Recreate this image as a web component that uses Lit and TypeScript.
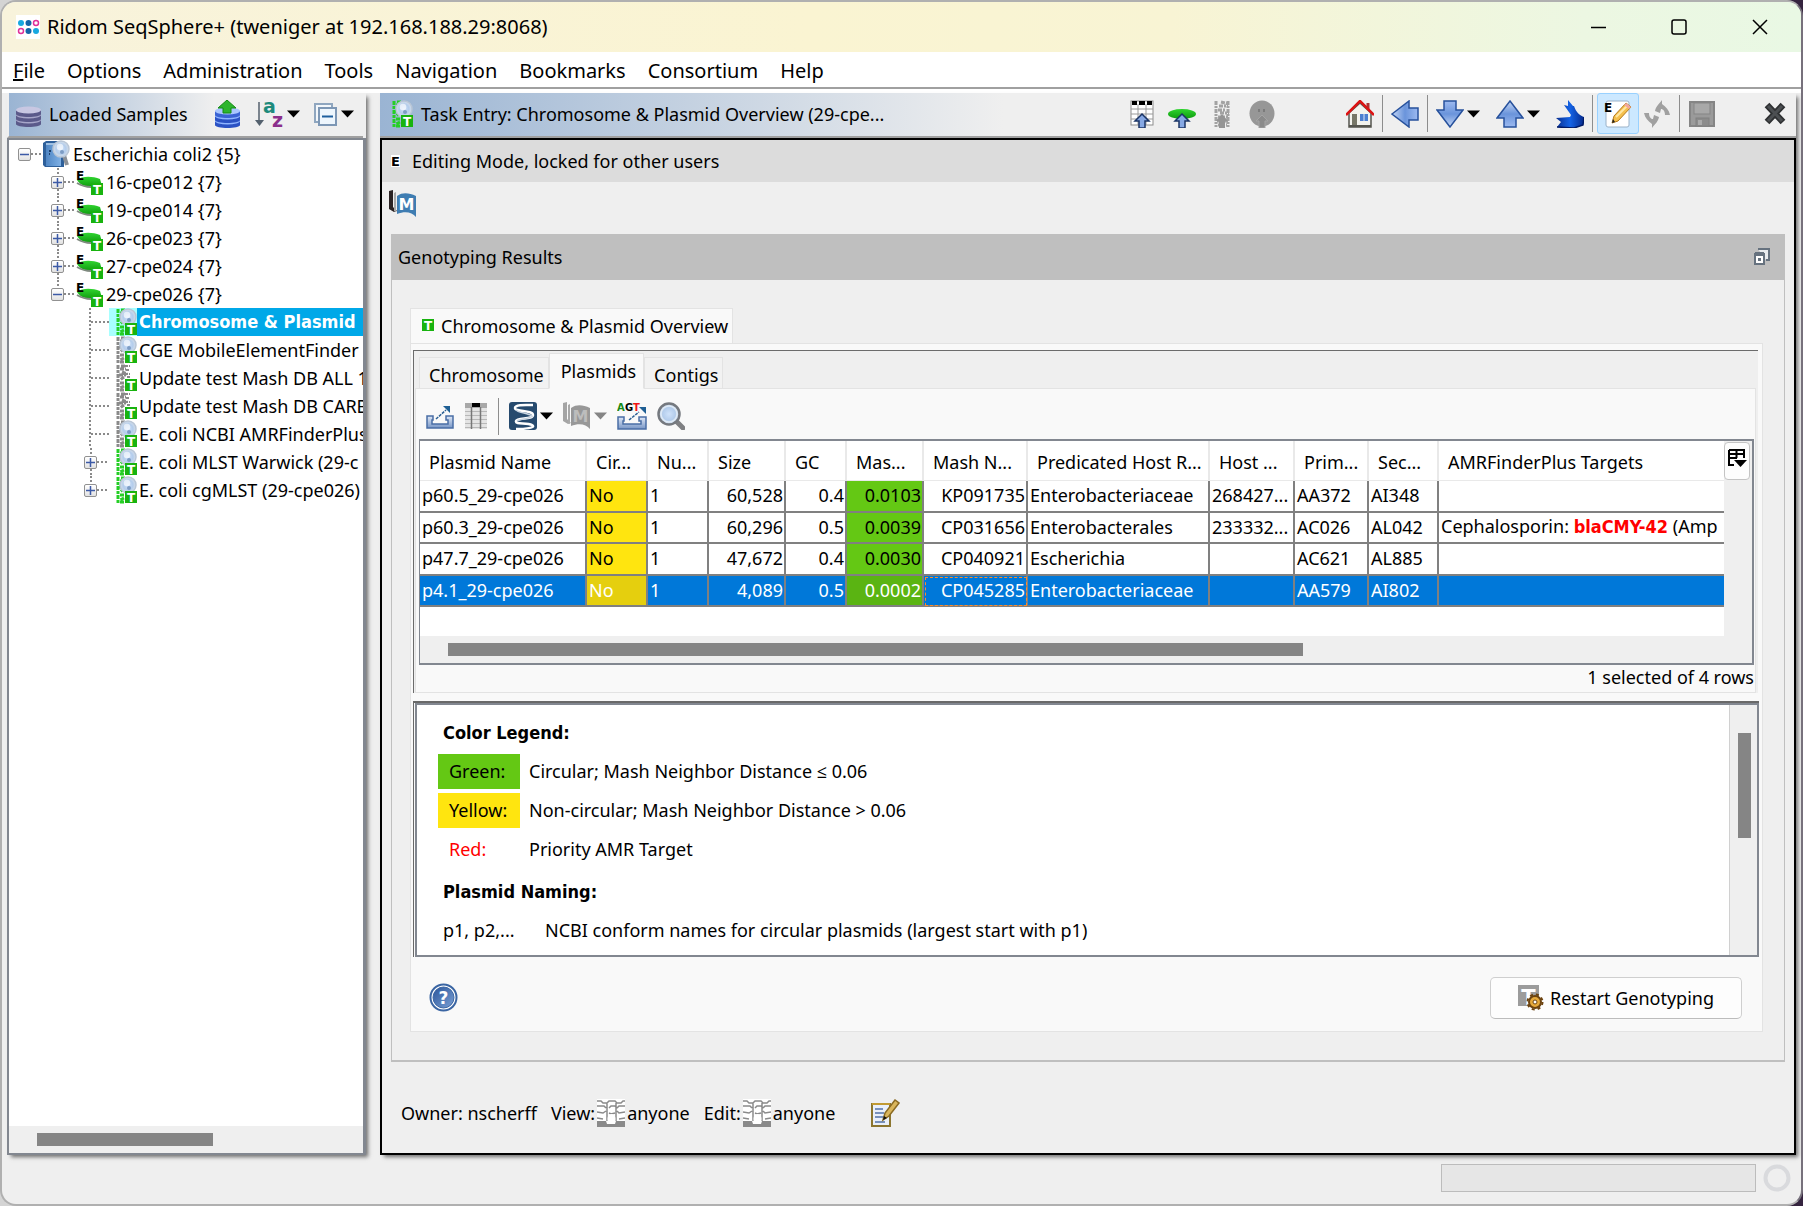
import { LitElement, html, svg, css, nothing, TemplateResult, SVGTemplateResult } from "lit";
import { customElement, state } from "lit/decorators.js";
import { classMap } from "lit/directives/class-map.js";

const icon = (w: number, h: number, body: SVGTemplateResult | SVGTemplateResult[]) =>
  html`<svg class="icon" width=${w} height=${h} viewBox="0 0 ${w} ${h}" aria-hidden="true">${body}</svg>`;

const badgeT = (x: number, y: number, s = 12, fill = "#18b30f") => svg`
  <rect x=${x} y=${y} width=${s} height=${s} fill=${fill} />
  <text x=${x + s / 2} y=${y + s - 1} font-size=${s} font-weight="bold" text-anchor="middle" fill="#fff" class="glyph">T</text>`;

const lens = (x: number, y: number, r: number) => svg`
  <circle cx=${x} cy=${y} r=${r} fill="url(#glass)" stroke="#b9c6d6" stroke-width="1.5" />
  <circle cx=${x - 1} cy=${y - 2} r=${r / 2.4} fill="#fff" opacity=".65" />
  <circle cx=${x + 1} cy=${y + 3} r="2" fill="#7d9cc4" />`;

const helix = (color: string) => svg`
  <path d="M2 1v26M5 2h4M4 5h6M6 8l5 2M3 11h7M8 13l-4 3M4 19h6M8 22l-4 2M4 26h5" fill="none" stroke=${color}
    stroke-width="3" stroke-dasharray="4 1 3 1" />`;

const iconTask = (color: string, withLens: boolean) => icon(21, 28, [
  helix(color),
  withLens ? lens(12, 9, 8) : svg`<path d="M9 2h5M10 6h4M9 10h5M11 13h3" stroke=${color} stroke-width="2" stroke-dasharray="3 1" />`,
  badgeT(9, 15),
]);

const iconSample = icon(28, 28, svg`
  <path d="M1 12c5-4 15-4 23-1l2 7-9 1c-7 0-13-2-16-7z" fill="url(#leaf)" />
  <path d="M1 15c5 3 9 4 14 4" stroke="#7f8a7f" stroke-width="2" fill="none" />
  <text x="0" y="12" font-size="12" font-weight="bold" class="glyph">E</text>${badgeT(15, 15)}`);

const iconProject = icon(28, 28, svg`
  <path d="M0 3l3-2h18v26H2l-2-2z" fill="#2d5f9a" /><rect x="3" y="3" width="15" height="23" fill="url(#folder)" />
  <path d="M3 4h15" stroke="#9fc0e2" stroke-width="2" /><path d="M20 12l4 13" stroke="#8b9097" stroke-width="4" />
  <path d="M6 11h2M10 11h1M6 14h1" stroke="#1c3f6d" stroke-width="2" />${lens(18, 9, 8)}`);

const dbDisk = (y: number, light: string, dark: string) => svg`
  <path d="M2 ${y}v4c0 4 25 4 25 0v-4z" fill=${dark} /><ellipse cx="14.5" cy=${y} rx="12.5" ry="3.5" fill=${light} />`;
const iconDb = icon(29, 28, svg`
  ${dbDisk(20, "#a7a6c9", "#5b5a8a")}${dbDisk(15, "#a7a6c9", "#5b5a8a")}${dbDisk(10, "#c8c7e2", "#5b5a8a")}`);
const iconDbUp = icon(28, 28, svg`
  ${dbDisk(21, "#8fb4ff", "#2b52c4")}${dbDisk(16, "#8fb4ff", "#2b52c4")}${dbDisk(11, "#a9c6ff", "#3a63d4")}
  <path d="M14 0l9 8h-5v5h-8V8H5z" fill="#2db52d" stroke="#158a15" />`);
const iconSort = icon(29, 28, svg`
  <path d="M4 2v20" stroke="#54616e" stroke-width="1.5" /><path d="M0 20h9l-4.500 6z" fill="#54616e" />
  <text x="8" y="13" font-size="19" font-weight="bold" fill="#1d8a7b" class="glyph">a</text>
  <text x="17" y="27" font-size="19" font-weight="bold" fill="#8b2f8b" class="glyph">z</text>`);
const iconCollapse = icon(24, 28, svg`
  <rect x="1" y="4" width="17" height="18" fill="#f3f7fb" stroke="#8fa6bf" stroke-width="2" />
  <rect x="5" y="8" width="17" height="17" fill="#eef6fd" stroke="#7d97b5" stroke-width="2" />
  <path d="M8 16.500h11" stroke="#1e5f9e" stroke-width="2" />`);
const caret = (color = "#000") => icon(13, 28, svg`<path d="M0 10.500h13l-6.500 7z" fill=${color} />`);

const upArrow = (x: number) =>
  svg`<path d="M${x} 14l7 7h-4v7h-6v-7h-4z" fill="#86a8e4" stroke="#1b3566" stroke-width="1.5" />`;
const iconTableUp = icon(28, 28, svg`
  <rect x="3" y="1" width="22" height="24" fill="#fff" stroke="#8d8d8d" /><path d="M10 4v21M18 4v21M3 9h22M3 14h22M3 19h22" stroke="#9a9a9a" />
  <path d="M4 1h5v4H4zM11 1h6v4h-6zM19 1h5v4h-5z" fill="#000" />${upArrow(14)}`);
const iconGreenUp = icon(28, 28, svg`
  <ellipse cx="14" cy="14" rx="14" ry="5" fill="url(#leaf)" />${upArrow(14)}`);
const iconHelixUp = icon(28, 28, svg`
  <path d="M8 1v26M13 2l8 2M11 6h9M10 10h8M12 13h9M10 17h10M9 21h11M10 25h9M20 1v26" fill="none" stroke="#a2a2a2" stroke-width="3" stroke-dasharray="4 1 2 1" />
  <path d="M14 14l6 7h-3v7h-6v-7H8z" fill="#949494" />`);
const iconBallUp = icon(28, 28, svg`
  <ellipse cx="14" cy="13.500" rx="12.500" ry="13" fill="#979797" /><path d="M14 15l6 6h-3v7h-6v-7H8z" fill="#8a8a8a" stroke="#a4a4a4" />
  <path d="M11 9v3M16 9v3" stroke="#7b7b7b" stroke-width="2" />`);
const iconHome = icon(28, 28, svg`
  <path d="M3 13L14 3l11 10v14H3z" fill="#f3f3ee" stroke="#55554e" stroke-width="1.5" /><path d="M22 3v6" stroke="#a33" stroke-width="3" />
  <path d="M0 15L14 1l14 14" fill="none" stroke="#dc1414" stroke-width="2.500" />
  <rect x="6" y="14" width="5" height="12" fill="#777768" /><rect x="14" y="14" width="8" height="7" fill="#4c7fd0" />
  <path d="M18 14v7" stroke="#dfe9f8" /><path d="M3 26h22" stroke="#55554e" stroke-width="2" />`);
const arrow = (turn: number) => icon(28, 28, svg`
  <g transform="rotate(${turn} 14 14)"><path d="M14 1l13 17h-7v9H8v-9H1z" fill="url(#blueArrow)" stroke="#27519c" stroke-width="1.5" /></g>`);
const iconJump = icon(28, 28, svg`
  <path d="M12 0l5 6h1c2 6 5 9 10 11l-1 8-9 3-17-1 4-5-5-4 14-1 1-2-7-10 4 1z" fill="url(#jump)" />
  <path d="M1 27l17 1 9-3 1-8" stroke="#001a66" stroke-width="1.500" fill="none" />`);
const iconEdit = icon(28, 28, svg`
  <rect x="2" y="1" width="23" height="26" rx="2" fill="#fff" stroke="#9bb2c8" />
  <text x="0" y="12" font-size="12" font-weight="bold" class="glyph">E</text>
  <path d="M8 23l2-7L22 3l5 4-13 14z" fill="#f4c04d" stroke="#b57a1c" /><path d="M12 17L24 5" stroke="#ffe7a2" stroke-width="2" />
  <path d="M22 3l5 4-2 2-5-4z" fill="#f0a6a0" /><path d="M8 23l1-4 2 3z" fill="#222" />`);
const iconRefresh = icon(28, 28, svg`
  <path d="M12 11c1-5 4-7 7-11v4c4 3 7 6 8 11l-5 0c0-4-2-6-4-6l-1 4z" fill="#a0a0a0" />
  <path d="M16 17c-1 5-4 7-7 11v-4c-4-3-7-6-8-11h5c0 4 2 6 4 6l1-4z" fill="#a0a0a0" />`);
const iconSave = icon(28, 28, svg`
  <rect x="2" y="2" width="24" height="24" fill="#9a9a9a" stroke="#858585" stroke-width="2" /><rect x="6" y="3" width="16" height="11" fill="#a8a8a8" stroke="#858585" />
  <rect x="8" y="18" width="13" height="8" fill="#8b8b8b" stroke="#808080" /><rect x="10" y="20" width="4" height="5" fill="#aaa" />`);
const iconClose = icon(22, 28, svg`
  <path d="M3 5l16 17M19 5L3 22" stroke="#2f3133" stroke-width="6.500" /><path d="M4 6l14 15M18 6L4 21" stroke="#4c4f52" stroke-width="3" />`);

const iconE = icon(9, 12, svg`<rect width="9" height="12" fill="#fff" /><text x="0" y="11" font-size="13" font-weight="bold" class="glyph">E</text>`);
const mark = (a: string, b: string, c: string) => icon(28, 28, svg`
  <path d="M0 1l4-1v17l4 4-3 1-5-3z" fill=${a} /><path d="M5 3l2-1v20l-2-1z" fill="#a9a9a9" />
  <path d="M8 6c6-4 12-3 19 0v21c-4-5-11-6-19-3z" fill=${b} />
  <text x="17.500" y="20" font-size="16" font-weight="bold" text-anchor="middle" fill=${c} class="glyph">M</text>`);
const iconWindow = icon(18, 18, svg`
  <path d="M5 1h11v11h-3" fill="#e8ebee" stroke="#66727f" stroke-width="2" /><rect x="2" y="6" width="9" height="10" fill="#fff" stroke="#66727f" stroke-width="2" />
  <path d="M2 6h9" stroke="#66727f" stroke-width="4" /><rect x="5" y="10" width="3" height="3" fill="#66727f" />`);

const iconExport = icon(28, 28, svg`
  <path d="M1 14h6v4H6v4h16v-4h-2v-4h7v12H1z" fill="url(#tray)" stroke="#4a6ea5" stroke-width="1.5" />
  <path d="M10 17l10-9" stroke="#2b5f93" stroke-width="1.500" stroke-dasharray="3 1" /><path d="M17 4h7v7z" fill="#1f5f94" />`);
const iconColumns = icon(24, 28, svg`
  <rect x="1" y="1" width="22" height="26" fill="#e4e4e4" /><rect x="1" y="1" width="22" height="5" fill="#a8a8a8" /><rect x="8" y="1" width="8" height="4" fill="#000" />
  <path d="M1 9.500h22M1 13.500h22M1 17.500h22M1 21.500h22M1 25.500h22" stroke="#b8b8b8" /><path d="M7.500 5v22M16.500 5v22" stroke="#777" stroke-width="1.500" />`);
const iconStrand = icon(28, 28, svg`
  <rect width="28" height="28" rx="3" fill="#264a6e" />
  <path d="M24 3c-6 0-18-1-18 3s18 2 18 7-16 2-17 6 11 1 16 4-8 4-16 4" fill="none" stroke="#fff" stroke-width="2.500" />
  <path d="M7 8c3 3 12 3 16 6M24 14c-4 3-13 3-16 5" fill="none" stroke="#c8d5e2" stroke-width="1.500" />`);
const iconAgt = icon(30, 28, svg`
  <path d="M1 15h6v4H6v3h18v-3h-2v-4h7v12H1z" fill="url(#tray)" stroke="#4a6ea5" stroke-width="1.5" />
  <path d="M12 18l10-8" stroke="#2b5f93" stroke-width="1.500" stroke-dasharray="3 1" /><path d="M22 5h7v7z" fill="#1f5f94" />
  <text x="0" y="9" font-size="10" font-weight="bold" fill="#178a17" class="glyph">A</text><text x="8" y="9" font-size="10" font-weight="bold" class="glyph">G</text>
  <text x="16" y="9" font-size="10" font-weight="bold" fill="#f01414" class="glyph">T</text>`);
const iconFind = icon(28, 28, svg`
  <path d="M19 19l7 7" stroke="#7f8083" stroke-width="5" stroke-linecap="round" /><circle cx="12" cy="12" r="10.500" fill="url(#glass)" stroke="#75797f" stroke-width="2.500" />
  <circle cx="12" cy="12" r="8" fill="none" stroke="#dfeaf6" stroke-width="1.500" />`);
const iconColumnMenu = icon(19, 20, svg`
  <path d="M1 1h15v8M1 1v15h5M1 5h15M8.500 1v8M1 9h8" fill="none" stroke="#000" stroke-width="2" /><path d="M6 11h13l-6.500 7z" fill="#000" />`);

const iconHelp = icon(29, 29, svg`
  <circle cx="14.500" cy="14.500" r="13" fill="#fff" stroke="#3a65a3" stroke-width="2" /><circle cx="14.500" cy="14.500" r="10.500" fill="url(#help)" stroke="#3a65a3" />
  <text x="14.500" y="21" font-size="17" font-weight="bold" text-anchor="middle" fill="#fff" class="glyph">?</text>`);
const iconRestart = icon(26, 26, svg`
  ${badgeT(0, 0, 21, "#9c9c9c")}
  <circle cx="17" cy="17" r="6" fill="#e6a93a" stroke="#6d4410" stroke-width="2" /><circle cx="17" cy="17" r="7.500" fill="none" stroke="#6d4410" stroke-width="2" stroke-dasharray="3 3" />
  <circle cx="17" cy="17" r="2" fill="#fff" stroke="#6d4410" />`);
const iconGroup = icon(28, 28, svg`
  <rect width="28" height="28" fill="#fff" />
  <path d="M0 2h4l2 2h4l2-2h6l2 2h4l2-2h2M0 7h7l2 2M12 9l2-2h4l2 2M28 7h-6l-2 2M0 13l6 1 3-2M12 14l2 1 4-1M28 13l-6 1-2-2M10 4v18M19 4v18M0 19l6 1M28 19l-6 1" fill="none" stroke="#8a8a8a" stroke-width="1.500" />
  <path d="M0 22h9l1 3h8l1-3h9v6H0z" fill="#8a8a8a" /><ellipse cx="14.500" cy="20" rx="4" ry="5" fill="#fff" />`);
const iconNote = icon(29, 28, svg`
  <rect x="1" y="5" width="18" height="22" fill="#eaf0fa" stroke="#8c7630" stroke-width="2" /><path d="M1 5h18" stroke="#c29a32" stroke-width="2" />
  <path d="M4 10h8M4 14h9M4 18h9M4 23h10" stroke="#5372a8" stroke-width="1.500" />
  <path d="M12 21l2-7L24 1l4 3-10 13z" fill="#d9b55c" stroke="#8a6a22" stroke-width="1.500" /><path d="M12 21l1-4 3 2z" fill="#111" />`);
const iconRidom = icon(24, 24, svg`
  <rect width="24" height="24" fill="#fff" /><g stroke-width="1.500">
  <circle cx="5" cy="8" r="3" fill="#18a8e0" /><circle cx="12.500" cy="8" r="3" fill="#1565a8" /><circle cx="20" cy="8" r="2.500" fill="none" stroke="#e0319a" />
  <circle cx="5" cy="16" r="2.500" fill="none" stroke="#e0319a" /><circle cx="12.500" cy="16" r="3" fill="#1565a8" /><circle cx="20" cy="16" r="3" fill="#18a8e0" /></g>`);

const defs = html`<svg class="defs" width="0" height="0" aria-hidden="true"><defs>
  <radialGradient id="glass"><stop offset="0" stop-color="#cfe2fa" /><stop offset=".6" stop-color="#b4cdec" /><stop offset="1" stop-color="#d5dfea" /></radialGradient>
  <linearGradient id="leaf" x2="0" y2="1"><stop offset="0" stop-color="#2fd42f" /><stop offset="1" stop-color="#0f9a0f" /></linearGradient>
  <linearGradient id="folder"><stop offset="0" stop-color="#4f86c4" /><stop offset="1" stop-color="#7fb0e4" /></linearGradient>
  <linearGradient id="blueArrow" x2="0" y2="1"><stop offset="0" stop-color="#c4d6f5" /><stop offset=".5" stop-color="#6a94db" /><stop offset="1" stop-color="#9dbaf0" /></linearGradient>
  <linearGradient id="jump"><stop offset="0" stop-color="#0a2f8f" /><stop offset=".5" stop-color="#1463e6" /><stop offset="1" stop-color="#062a8c" /></linearGradient>
  <linearGradient id="tray" x2="0" y2="1"><stop offset="0" stop-color="#dfe8f6" /><stop offset="1" stop-color="#7896c6" /></linearGradient>
  <linearGradient id="help" x2="1" y2="1"><stop offset="0" stop-color="#2a559b" /><stop offset="1" stop-color="#7ba0d4" /></linearGradient>
</defs></svg>`;

interface Node { level: 0 | 1 | 2; label: string; art: TemplateResult; fold?: "open" | "closed"; last?: boolean; current?: boolean }
const GREEN = "#25cf25", GREY = "#8a8a8a";
const TREE: Node[] = [
  { level: 0, label: "Escherichia coli2 {5}", art: iconProject, fold: "open" },
  { level: 1, label: "16-cpe012 {7}", art: iconSample, fold: "closed" },
  { level: 1, label: "19-cpe014 {7}", art: iconSample, fold: "closed" },
  { level: 1, label: "26-cpe023 {7}", art: iconSample, fold: "closed" },
  { level: 1, label: "27-cpe024 {7}", art: iconSample, fold: "closed" },
  { level: 1, label: "29-cpe026 {7}", art: iconSample, fold: "open", last: true },
  { level: 2, label: "Chromosome & Plasmid", art: iconTask(GREEN, true), current: true },
  { level: 2, label: "CGE MobileElementFinder (", art: iconTask(GREY, true) },
  { level: 2, label: "Update test Mash DB ALL 1", art: iconTask(GREY, false) },
  { level: 2, label: "Update test Mash DB CARB", art: iconTask(GREY, false) },
  { level: 2, label: "E. coli NCBI AMRFinderPlus", art: iconTask(GREY, true) },
  { level: 2, label: "E. coli MLST Warwick (29-c", art: iconTask(GREEN, true), fold: "closed" },
  { level: 2, label: "E. coli cgMLST (29-cpe026)", art: iconTask(GREEN, true), fold: "closed", last: true },
];

const COLUMNS = [
  ["name", "Plasmid Name"], ["circ", "Cir..."], ["num", "Nu..."], ["size", "Size"], ["gc", "GC"], ["mash", "Mas..."], ["near", "Mash N..."],
  ["host", "Predicated Host R..."], ["hostid", "Host ..."], ["prim", "Prim..."], ["sec", "Sec..."], ["amr", "AMRFinderPlus Targets"],
];
const amr = html`Cephalosporin: <b class="alert">blaCMY-42</b> (Amp`;
const ROWS: (string | TemplateResult)[][] = [
  ["p60.5_29-cpe026", "No", "1", "60,528", "0.4", "0.0103", "KP091735", "Enterobacteriaceae", "268427...", "AA372", "AI348", ""],
  ["p60.3_29-cpe026", "No", "1", "60,296", "0.5", "0.0039", "CP031656", "Enterobacterales", "233332...", "AC026", "AL042", amr],
  ["p47.7_29-cpe026", "No", "1", "47,672", "0.4", "0.0030", "CP040921", "Escherichia", "", "AC621", "AL885", ""],
  ["p4.1_29-cpe026", "No", "1", "4,089", "0.5", "0.0002", "CP045285", "Enterobacteriaceae", "", "AA579", "AI802", ""],
];

@customElement("app-root")
export class AppRoot extends LitElement {
  @state() private selected = 3;

  static styles = css`
    :host { display: block; height: 100vh; font: 18px/28px "Noto Sans", "Open Sans", sans-serif; color: #000;
      background: linear-gradient(90deg, #d4d4d4 50%, #35243f 50%); }
    * { box-sizing: border-box; }
    b, h2, .current .label { font-family: "DejaVu Sans Condensed", "DejaVu Sans", sans-serif; font-weight: bold; }
    button { font: inherit; color: inherit; background: none; border: 0; padding: 0; margin: 0; display: inline-flex; align-items: center; }
    ul, dl, dd, dt, h1, h2, p { margin: 0; padding: 0; }
    .icon { display: block; flex: none; }
    .glyph { font-family: "DejaVu Sans", sans-serif; }
    .defs { position: absolute; }
    .fill { flex: 1; min-width: 0; }
    .window { height: 100%; display: flex; flex-direction: column; background: #efefef; border: 2px solid #b0b0b0; border-right-color: #77717c;
      border-radius: 16px; overflow: hidden; }

    .titlebar { height: 50px; flex: none; display: flex; align-items: center; gap: 7px; padding: 0 33px 0 14px; font-size: 20px;
      background: linear-gradient(90deg, #f8f3dc, #faf4d2 45%, #f8f4d4 65%, #ecf7e2 88%, #e9f8e4); }
    .titlebar h1 { font-size: 20px; font-weight: normal; }
    .titlebar .controls { display: flex; gap: 65px; }
    .menubar { height: 37px; flex: none; display: flex; gap: 22px; padding: 3px 11px 0; background: #fff; border-bottom: 2px solid #a0a0a0; font-size: 20px; }
    .strip { height: 4px; flex: none; background: #fff; }

    .main { flex: 1; min-height: 0; display: flex; gap: 14px; padding: 0 5px; }
    .panel { display: flex; flex-direction: column; min-height: 0; box-shadow: 3px 3px 4px -1px rgba(0, 0, 0, .55); }
    .side { width: 359px; flex: none; }
    .task { flex: 1; min-width: 0; }
    .bar { height: 45px; flex: none; display: flex; align-items: center; padding-bottom: 2px; border-bottom: 2px solid #a0a0a0; white-space: nowrap; }
    .side .bar { margin: 0 3px 0 0; padding-left: 5px; padding-right: 9px; gap: 14px; background: linear-gradient(90deg, #9ab4d3, #efefef 58%); border-left: 2px solid #efefef; }
    .side .bar .title { display: flex; align-items: center; gap: 6px; }
    .task .bar { padding-left: 12px; padding-right: 10px; gap: 8px; background: linear-gradient(90deg, #9ab4d3, #efefef 44%); }
    .bar h2 { font: inherit; }
    .drop { display: inline-flex; gap: 3px; }
    .task .bar .drop { padding-right: 8px; }
    .sep { width: 1px; height: 37px; background: #8d8d8d; }
    .shelf { display: flex; gap: 12px; margin-right: 62px; }
    .mode { display: flex; align-items: center; gap: 4px; }
    .mode .on { padding: 6px; height: 41px; border: 1px solid #99d1ff; border-radius: 3px; background: #cce8ff; }
    .dismiss { margin-left: 40px; }

    .treebox { flex: 1; min-height: 0; display: flex; flex-direction: column; background: #fff; border: 2px solid #828790; border-right-width: 3px; }
    .tree { flex: 1; overflow: hidden; list-style: none; }
    .node { display: flex; height: 28px; align-items: center; white-space: nowrap; }
    .node > * { flex: none; }
    .node.l0 { padding-left: 9px; }
    .node.l1 { padding-left: 42px; }
    .node.l2 { padding-left: 75px; }
    .node.leaf { padding-left: 80px; }
    .rail { width: 13px; height: 28px; display: flex; flex-direction: column; align-items: center; }
    .leaf .rail { width: 2px; }
    .v { flex: 1; width: 2px; background: repeating-linear-gradient(#8a8a8a 0 2px, transparent 2px 4px); }
    .v.off { background: none; }
    .h { width: 12px; height: 2px; background: repeating-linear-gradient(90deg, #8a8a8a 0 2px, transparent 2px 4px); }
    .leaf .h { width: 18px; }
    .fold { width: 13px; height: 13px; justify-content: center; border: 1px solid #919191; border-radius: 2px; background: linear-gradient(#fff, #e2e2e2); }
    .art { display: flex; }
    .l2 .art { padding-left: 7px; }
    .label { padding-left: 2px; height: 28px; }
    .current .art { background: #a8ffff; }
    .current .label { flex: 1; background: #00a8e8; color: #fff; }
    .htrack { height: 27px; flex: none; padding: 7px 28px; background: #efefef; }
    .thumb { background: #858585; height: 13px; }
    .side .thumb { width: 59%; }

    .body { flex: 1; min-height: 0; display: flex; flex-direction: column; border: 2px solid #000; }
    .banner { height: 42px; flex: none; display: flex; align-items: center; gap: 12px; padding-left: 9px; background: #dcdcdc; }
    .quick { height: 52px; flex: none; padding: 8px 7px; }
    .group { flex: 1; min-height: 0; display: flex; flex-direction: column; margin: 0 9px; border: 1px solid #bfbfbf; border-width: 0 1px 2px; }
    .grouphead { height: 46px; flex: none; display: flex; align-items: center; justify-content: space-between; padding: 0 13px 0 6px; background: #bfbfbf; }
    .grouphead h2 { font: inherit; }
    .groupbody { flex: 1; min-height: 0; display: flex; flex-direction: column; padding: 28px 21px 28px 18px; }
    .tabs { display: flex; align-items: flex-end; margin-bottom: -1px; }
    .tab { border: 1px solid #e3e3e3; background: #f2f2f2; }
    .tab.active { border-bottom-color: #f9f9f9; background: #f9f9f9; }
    .outer > .tab { height: 36px; padding: 0 4px 0 11px; gap: 7px; }
    .pane { flex: 1; min-height: 0; display: flex; flex-direction: column; padding: 6px 3px 0 2px; border: 1px solid #e3e3e3; background: #f9f9f9; }
    .upper { flex: none; margin-right: 1px; padding: 2px 2px 0 1px; border: solid #6b6b6b; border-width: 1px 0 0 1px; background: #efefef; }
    .inner { padding-left: 4px; }
    .inner > .tab { height: 32px; padding: 3px 4px 0 9px; }
    .inner > .tab.active { height: 36px; padding: 0 7px 1px 11px; }
    .sheet { padding: 0 1px 0 3px; border: 1px solid #e3e3e3; background: #f9f9f9; }
    .tools { height: 50px; display: flex; align-items: center; gap: 10px; padding: 4px 7px 0; }
    .grid { border: 2px solid #828790; border-left-width: 1px; background: #efefef; }
    .gridtop { display: flex; }
    .view { flex: 1; min-width: 0; overflow: hidden; background: #fff; padding-bottom: 29px; }
    .corner { width: 28px; flex: none; padding-top: 1px; }
    .corner button { width: 26px; height: 38px; justify-content: center; padding-bottom: 5px; border: 1px solid #c4c4c4; border-radius: 4px; background: #fdfdfd; }
    .grid .thumb { width: 67%; }
    table { width: 100%; table-layout: fixed; border-collapse: separate; border-spacing: 0; }
    th { height: 40px; padding: 2px 0 0 9px; text-align: left; font-weight: normal; white-space: nowrap; overflow: hidden; border: solid #e9e9e9; border-width: 0 2px 1px 0; }
    td { height: 31px; padding: 0 2px 2px; line-height: 26px; white-space: nowrap; overflow: hidden; border: solid #808080; border-width: 0 2px 2px 0; }
    tbody tr:nth-child(odd) td { height: 32px; }
    th:last-child, td:last-child { border-right: 0; }
    .name { width: 167px; } .circ, .num, .gc { width: 61px; } .size, .mash { width: 77px; } .near { width: 104px; }
    .host { width: 182px; } .hostid { width: 85px; } .prim { width: 74px; } .sec { width: 70px; }
    td.size, td.gc, td.mash, td.near { text-align: right; padding-left: 0; padding-right: 1px; }
    td.circ { background: #ffe50f; }
    td.mash { background: #64c814; }
    tr.picked td { background: #0078d9; color: #fff; }
    tr.picked td.circ { background: #e5cf0e; }
    tr.picked td.mash { background: #5ab412; }
    tr.picked td.near { outline: 1px dashed #ff8c28; outline-offset: -2px; }
    .alert { color: #f00; }
    .count { height: 27px; line-height: 25px; text-align: right; }

    .lower { flex: 1; min-height: 0; display: flex; margin-top: 8px; padding-left: 1px; border: solid #696969; border-width: 2px 0 0 1px; }
    .legend { flex: 1; display: flex; border: 2px solid #828790; background: #fff; }
    .text { flex: 1; min-width: 0; padding: 14px 21px 0; overflow: hidden; }
    .text h2 { font-size: 18px; line-height: 28px; padding-left: 5px; margin-bottom: 7px; }
    .text h2 + dl + h2 { margin-top: 11px; }
    dl { display: grid; gap: 4px 9px; grid-template-columns: 82px 1fr; line-height: 35px; }
    dl.naming { grid-template-columns: 98px 1fr; }
    dt { padding-left: 11px; }
    .naming dt { padding-left: 5px; }
    dt.green { background: #64c814; }
    dt.yellow { background: #ffe50f; }
    dt.red { color: #f00; }
    .vtrack { width: 28px; padding: 28px 6px 28px 8px; background: #efefef; border-left: 1px solid #d0d0d0; }
    .vtrack .thumb { height: 105px; }
    .foot { height: 74px; flex: none; display: flex; align-items: center; justify-content: space-between; padding: 7px 17px 0 16px; }
    .restart { height: 42px; gap: 6px; padding: 0 27px; border: 1px solid #cfcfcf; border-bottom-color: #bcbcbc; border-radius: 5px; background: #fdfdfd; }

    .owner { height: 91px; flex: none; display: flex; align-items: center; gap: 14px; padding: 10px 0 0 19px; }
    .owner span { display: inline-flex; align-items: center; gap: 2px; }
    .owner button { margin-left: 22px; }
    .status { height: 49px; flex: none; display: flex; align-items: center; justify-content: flex-end; gap: 7px; padding: 0 10px 3px; }
    .progress { width: 315px; height: 28px; border: 1px solid #bcbcbc; background: #e6e6e6; }
  `;

  private node(n: Node) {
    const leaf = !n.fold;
    return html`<li class=${classMap({ node: true, [`l${n.level}`]: true, leaf, current: !!n.current })}>
      <span class="rail">
        <span class=${classMap({ v: true, off: n.level === 0 })}></span>
        ${leaf ? nothing : html`
          <button class="fold" aria-label="Toggle ${n.label}">${icon(9, 9, svg`<path d=${n.fold === "open" ? "M0 4.500h9" : "M0 4.500h9M4.500 0v9"} stroke="#3c5aa6" stroke-width="1.500" />`)}</button>
          <span class=${classMap({ v: true, off: n.level === 0 || !!n.last })}></span>`}
      </span>
      <span class="h"></span><span class="art">${n.art}</span><span class="label">${n.label}</span>
    </li>`;
  }

  render() {
    return html`${defs}
    <div class="window">
      <header class="titlebar">
        ${iconRidom}<h1 class="fill">Ridom SeqSphere+ (tweniger at 192.168.188.29:8068)</h1>
        <div class="controls">
          <button aria-label="Minimize">${icon(16, 16, svg`<path d="M1 8.500h15" stroke="#000" stroke-width="1.500" />`)}</button>
          <button aria-label="Maximize">${icon(16, 16, svg`<rect x="1" y="1" width="14" height="14" rx="2" fill="none" stroke="#000" stroke-width="1.500" />`)}</button>
          <button aria-label="Close">${icon(16, 16, svg`<path d="M1 1l14 14M15 1L1 15" stroke="#000" stroke-width="1.500" />`)}</button>
        </div>
      </header>
      <nav class="menubar">
        <button><span><u>F</u>ile</span></button>
        ${["Options", "Administration", "Tools", "Navigation", "Bookmarks", "Consortium", "Help"].map((m) => html`<button>${m}</button>`)}
      </nav>
      <div class="strip"></div>
      <div class="main">
        <aside class="panel side">
          <div class="bar">
            <div class="title fill">${iconDb}<h2>Loaded Samples</h2></div>
            <button aria-label="Load samples">${iconDbUp}</button>
            <button class="drop" aria-label="Sort">${iconSort}${caret()}</button>
            <button class="drop" aria-label="Collapse">${iconCollapse}${caret()}</button>
          </div>
          <div class="treebox">
            <ul class="tree">${TREE.map((n) => this.node(n))}</ul>
            <div class="htrack"><div class="thumb"></div></div>
          </div>
        </aside>
        <section class="panel task">
          <div class="bar">
            ${iconTask(GREEN, true)}<h2 class="fill">Task Entry: Chromosome &amp; Plasmid Overview (29-cpe...</h2>
            <div class="shelf">
              <button aria-label="Table">${iconTableUp}</button><button aria-label="Sample">${iconGreenUp}</button>
              <button aria-label="Sequence" disabled>${iconHelixUp}</button><button aria-label="Project" disabled>${iconBallUp}</button>
            </div>
            <button aria-label="Home">${iconHome}</button><span class="sep"></span>
            <button aria-label="Back">${arrow(-90)}</button><span class="sep"></span>
            <button class="drop" aria-label="Next">${arrow(180)}${caret()}</button>
            <button class="drop" aria-label="Previous">${arrow(0)}${caret()}</button>
            <button aria-label="Jump">${iconJump}</button>
            <div class="mode"><span class="sep"></span><button class="on" aria-label="Edit" aria-pressed="true">${iconEdit}</button><button aria-label="Refresh" disabled>${iconRefresh}</button></div>
            <span class="sep"></span><button aria-label="Save" disabled>${iconSave}</button>
            <button class="dismiss" aria-label="Close entry">${iconClose}</button>
          </div>
          <div class="body">
            <div class="banner">${iconE}<span>Editing Mode, locked for other users</span></div>
            <div class="quick"><button aria-label="Mash">${mark("#2a2223", "#3f7db2", "#fff")}</button></div>
            <section class="group">
              <header class="grouphead"><h2>Genotyping Results</h2><button aria-label="Detach">${iconWindow}</button></header>
              <div class="groupbody">
                <div class="tabs outer"><button class="tab active">${icon(12, 15, badgeT(0, 0))}Chromosome &amp; Plasmid Overview</button></div>
                <div class="pane">
                  <div class="upper">
                    <div class="tabs inner">
                      <button class="tab">Chromosome</button><button class="tab active">Plasmids</button><button class="tab">Contigs</button>
                    </div>
                    <div class="sheet">
                      <div class="tools">
                        <button aria-label="Export">${iconExport}</button><button aria-label="Columns">${iconColumns}</button><span class="sep"></span>
                        <button class="drop" aria-label="Strand">${iconStrand}${caret()}</button>
                        <button class="drop" aria-label="Mash search" disabled>${mark("#a5a5a5", "#989898", "#bdbdbd")}${caret("#858585")}</button>
                        <button aria-label="Export sequence">${iconAgt}</button><button aria-label="Find">${iconFind}</button>
                      </div>
                      <div class="grid">
                        <div class="gridtop">
                          <div class="view">
                            <table>
                              <thead><tr>${COLUMNS.map(([k, t]) => html`<th class=${k}>${t}</th>`)}</tr></thead>
                              <tbody>${ROWS.map((r, i) => html`<tr class=${classMap({ picked: i === this.selected })} @click=${() => (this.selected = i)}>
                                ${r.map((c, j) => html`<td class=${COLUMNS[j][0]}>${c}</td>`)}</tr>`)}</tbody>
                            </table>
                          </div>
                          <div class="corner"><button aria-label="Choose columns">${iconColumnMenu}</button></div>
                        </div>
                        <div class="htrack"><div class="thumb"></div></div>
                      </div>
                      <p class="count">1 selected of 4 rows</p>
                    </div>
                  </div>
                  <div class="lower"><div class="legend">
                    <div class="text">
                      <h2>Color Legend:</h2>
                      <dl>
                        <dt class="green">Green:</dt><dd>Circular; Mash Neighbor Distance ≤ 0.06</dd>
                        <dt class="yellow">Yellow:</dt><dd>Non-circular; Mash Neighbor Distance &gt; 0.06</dd>
                        <dt class="red">Red:</dt><dd>Priority AMR Target</dd>
                      </dl>
                      <h2>Plasmid Naming:</h2>
                      <dl class="naming"><dt>p1, p2,...</dt><dd>NCBI conform names for circular plasmids (largest start with p1)</dd></dl>
                    </div>
                    <div class="vtrack"><div class="thumb"></div></div>
                  </div></div>
                  <div class="foot"><button aria-label="Help">${iconHelp}</button><button class="restart">${iconRestart}Restart Genotyping</button></div>
                </div>
              </div>
            </section>
            <div class="owner">
              <span>Owner: nscherff</span><span>View:${iconGroup}anyone</span><span>Edit:${iconGroup}anyone</span>
              <button aria-label="Edit permissions">${iconNote}</button>
            </div>
          </div>
        </section>
      </div>
      <footer class="status"><div class="progress"></div>${icon(28, 28, svg`<circle cx="14" cy="14" r="11.500" fill="none" stroke="#d9dadd" stroke-width="4" />`)}</footer>
    </div>`;
  }
}
